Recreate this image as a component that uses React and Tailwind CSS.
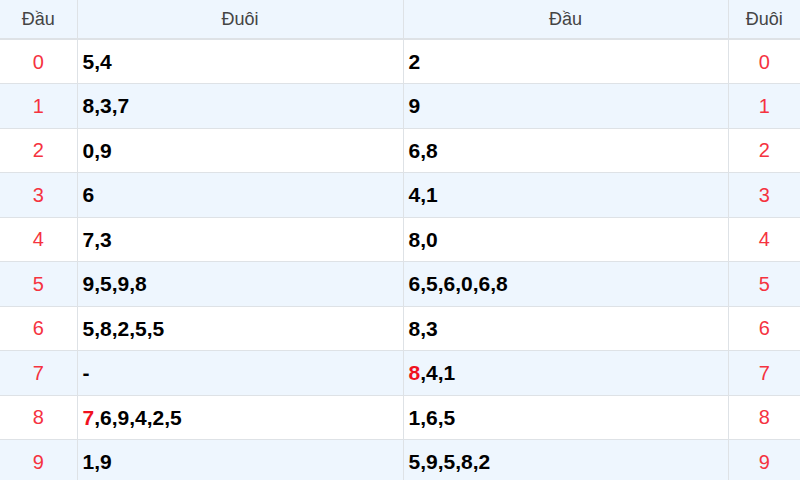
import React from 'react';

const rows = [
  { d: '0', left: [['5,4']], right: [['2']] },
  { d: '1', left: [['8,3,7']], right: [['9']] },
  { d: '2', left: [['0,9']], right: [['6,8']] },
  { d: '3', left: [['6']], right: [['4,1']] },
  { d: '4', left: [['7,3']], right: [['8,0']] },
  { d: '5', left: [['9,5,9,8']], right: [['6,5,6,0,6,8']] },
  { d: '6', left: [['5,8,2,5,5']], right: [['8,3']] },
  { d: '7', left: [['-']], right: [['8', true], [',4,1']] },
  { d: '8', left: [['7', true], [',6,9,4,2,5']], right: [['1,6,5']] },
  { d: '9', left: [['1,9']], right: [['5,9,5,8,2']] },
];

// red highlighted digit inside the bold list
const Nums = ({ parts }) =>
  parts.map(([t, hot], i) => (
    <span key={i} className={hot ? 'text-[#f0121f]' : ''}>{t}</span>
  ));

export default function App() {
  return (
    <div className="w-[800px] h-[480px] overflow-hidden bg-white font-['Liberation_Sans',Arial,sans-serif]">
      <table className="w-full table-fixed border-collapse">
        <colgroup>
          <col className="w-[77px]" />
          <col className="w-[326px]" />
          <col className="w-[325px]" />
          <col />
        </colgroup>
        <thead>
          <tr className="h-[39px] bg-[#eef6fe] text-[18px] text-[#444] border-b-2 border-[#dee2e6]">
            <th className="font-normal text-center border-r border-[#dee2e6]">Đầu</th>
            <th className="font-normal text-center border-r border-[#dee2e6]">Đuôi</th>
            <th className="font-normal text-center border-r border-[#dee2e6]">Đầu</th>
            <th className="font-normal text-center">Đuôi</th>
          </tr>
        </thead>
        <tbody>
          {rows.map((r, i) => (
            <tr
              key={r.d}
              className={`h-[44.5px] border-b border-[#dee2e6] ${i % 2 ? 'bg-[#eef6fe]' : 'bg-white'}`}
            >
              <td className="text-center text-[20px] text-[#f5333f] border-r border-[#dee2e6]">{r.d}</td>
              <td className="pl-[5px] text-[21px] font-bold text-black border-r border-[#dee2e6]">
                <Nums parts={r.left} />
              </td>
              <td className="pl-[5px] text-[21px] font-bold text-black border-r border-[#dee2e6]">
                <Nums parts={r.right} />
              </td>
              <td className="text-center text-[20px] text-[#f5333f]">{r.d}</td>
            </tr>
          ))}
        </tbody>
      </table>
    </div>
  );
}
